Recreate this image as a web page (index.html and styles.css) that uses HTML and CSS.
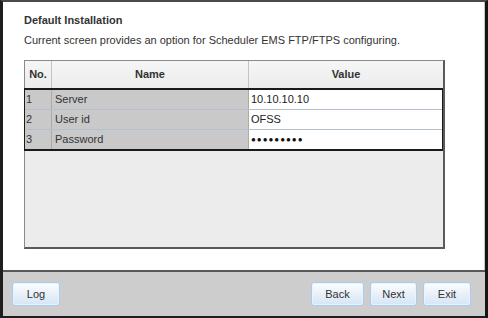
FILE: index.html
```html
<!DOCTYPE html>
<html>
<head>
<meta charset="utf-8">
<link rel="stylesheet" href="styles.css">
</head>
<body>
<div class="frame">
  <div class="content">
    <div class="title">Default Installation</div>
    <div class="desc">Current screen provides an option for Scheduler EMS FTP/FTPS configuring.</div>
    <div class="grid">
      <div class="head">
        <div class="hc c-no">No.</div>
        <div class="hc c-name">Name</div>
        <div class="hc c-val">Value</div>
      </div>
      <div class="rows">
        <div class="row">
          <div class="cell c-no">1</div>
          <div class="cell c-name">Server</div>
          <div class="cell c-val">10.10.10.10</div>
        </div>
        <div class="row">
          <div class="cell c-no">2</div>
          <div class="cell c-name">User id</div>
          <div class="cell c-val">OFSS</div>
        </div>
        <div class="row">
          <div class="cell c-no">3</div>
          <div class="cell c-name">Password</div>
          <div class="cell c-val pw">●●●●●●●●●</div>
        </div>
      </div>
      <div class="empty"></div>
    </div>
  </div>
  <div class="footer">
    <button class="btn w48">Log</button>
    <div class="spacer"></div>
    <button class="btn w53">Back</button>
    <button class="btn w47">Next</button>
    <button class="btn w48">Exit</button>
  </div>
</div>
</body>
</html>
```

FILE: styles.css
```css
* { box-sizing: border-box; }
html, body { margin: 0; padding: 0; background: #fff; }
body {
  font-family: "Liberation Sans", Arial, sans-serif;
  font-size: 11px;
  color: #333;
}
.frame {
  width: 488px;
  height: 318px;
  display: flex;
  flex-direction: column;
  border-top: 2px solid #4a4a4a;
  border-left: 3px solid #1e1e1e;
  border-right: 3px solid #151515;
  border-bottom: 2px solid #1e1e1e;
}
.content {
  flex: 1;
  padding: 11px 0 0 21px;
  background: #fff;
  border-right: 1px solid #c8c8c8;
}
.title {
  font-weight: bold;
  line-height: 14px;
  height: 14px;
  color: #333;
}
.desc {
  margin-top: 6px;
  line-height: 14px;
  height: 14px;
  color: #333;
}
.grid {
  margin-top: 13px;
  width: 421px;
  height: 189px;
  display: flex;
  flex-direction: column;
  border-top: 1px solid #8a8a8a;
  border-left: 1px solid #8a8a8a;
  border-right: 2px solid #5a5a5a;
  border-bottom: 2px solid #5a5a5a;
  background: #ececec;
}
.head {
  display: flex;
  height: 27px;
  background: linear-gradient(#f6f6f6, #ececec);
}
.hc {
  font-weight: bold;
  text-align: center;
  line-height: 26px;
  border-right: 1px solid #c4c4c4;
  color: #333;
}
.hc.c-val { border-right: none; }
.c-no { width: 27px; flex: none; }
.c-name { width: 197px; flex: none; }
.c-val { flex: 1; }
.rows {
  border: 1px solid #1a1a1a;
  border-width: 2px 1px 2px 1px;
  margin-left: -1px;
}
.row {
  display: flex;
  height: 20px;
  border-bottom: 1px solid #b4c0cc;
}
.row:last-child { border-bottom: none; height: 19px; }
.cell {
  line-height: 19px;
  padding-left: 2px;
  background: #c9c9c9;
  border-right: 1px solid #ababab;
  color: #333;
}
.cell.c-no { padding-left: 1px; }
.cell.c-name { padding-left: 3px; }
.cell.c-val {
  background: #fff;
  border-right: none;
  color: #222;
}
.cell.pw { font-size: 8px; letter-spacing: 1px; color: #111; }
.empty { flex: 1; }
.footer {
  height: 46px;
  flex: none;
  background: #cdcdcd;
  border-top: 2px solid #585858;
  display: flex;
  align-items: flex-start;
  padding: 10px 14px 0 9px;
  gap: 6px;
}
.spacer { flex: 1; }
.btn {
  height: 24px;
  border: 1px solid #a9cdee;
  border-radius: 3px;
  background: linear-gradient(#fdfdfe, #e4eef8 60%, #d6e6f6);
  font-family: "Liberation Sans", Arial, sans-serif;
  font-size: 11px;
  color: #333;
  padding: 0;
  box-shadow: inset 0 0 0 1px #eaf3fc;
}
.w48 { width: 48px; }
.w53 { width: 53px; }
.w47 { width: 47px; }
```
